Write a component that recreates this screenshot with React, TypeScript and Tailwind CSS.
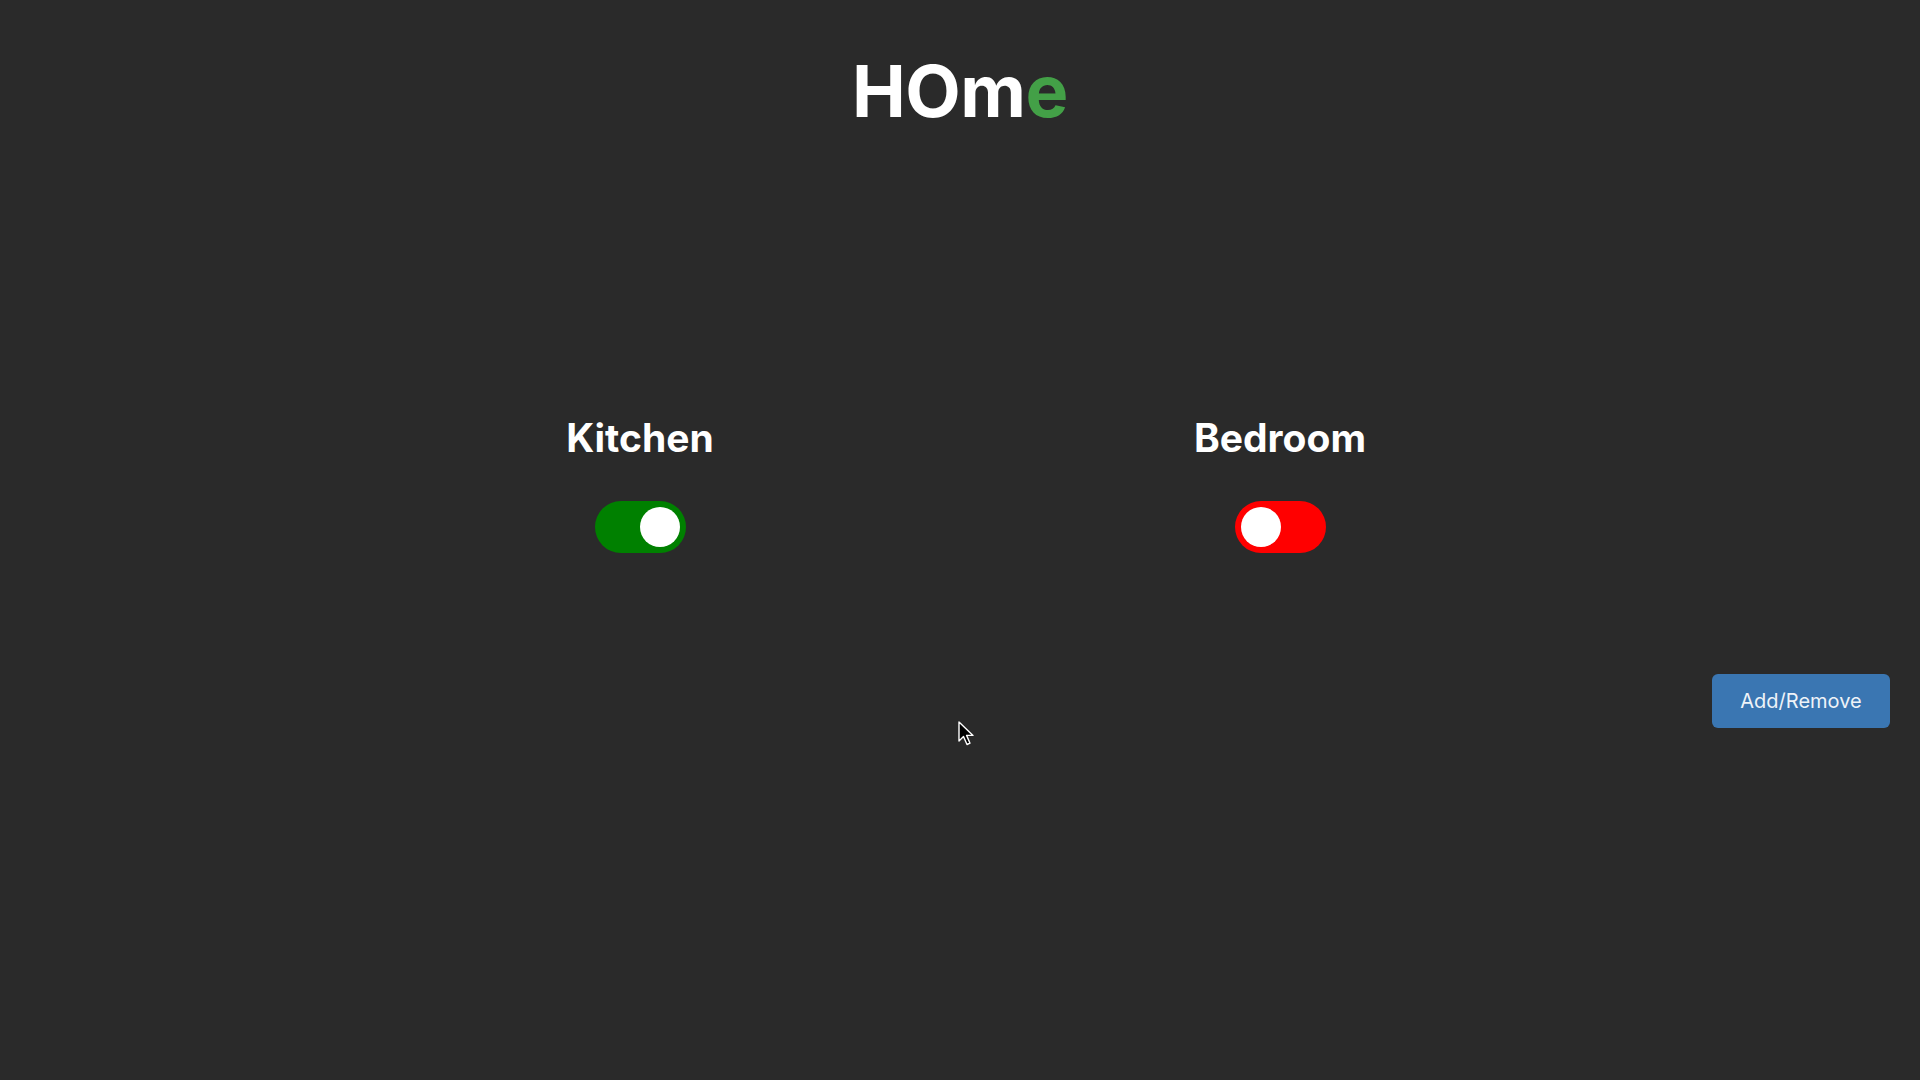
import { useState } from 'react';

type Room = { name: string; on: boolean };

function Toggle({ on, onClick }: { on: boolean; onClick: () => void }) {
  return (
    <button
      onClick={onClick}
      className={`flex items-center w-[91px] h-[52px] rounded-full px-[6px] ${
        on ? 'bg-[#008000] justify-end' : 'bg-[#ff0000] justify-start'
      }`}
    >
      <span className="block w-[40px] h-[40px] rounded-full bg-white" />
    </button>
  );
}

export default function App() {
  const [rooms, setRooms] = useState<Room[]>([
    { name: 'Kitchen', on: true },
    { name: 'Bedroom', on: false },
  ]);

  const flip = (i: number) =>
    setRooms(rooms.map((r, j) => (j === i ? { ...r, on: !r.on } : r)));

  return (
    <div
      className="relative min-h-screen w-full bg-[#2a2a2a] text-white flex flex-col"
      style={{ fontFamily: 'Inter, "Liberation Sans", sans-serif' }}
    >
      <h1 className="pt-[55px] text-center text-[72px] font-bold leading-none tracking-[-0.5px]">
        HOm<span className="text-[#43a047]">e</span>
      </h1>

      <div className="mt-[291px] grid grid-cols-2 px-[320px]">
        {rooms.map((r, i) => (
          <div key={r.name} className="flex flex-col items-center">
            <h2 className="text-[39px] font-bold leading-none">{r.name}</h2>
            <div className="mt-[44px]">
              <Toggle on={r.on} onClick={() => flip(i)} />
            </div>
          </div>
        ))}
      </div>

      <div className="mt-[121px] flex justify-end pr-[30px]">
        <button className="w-[178px] h-[54px] rounded-[6px] bg-[#3a76b2] text-[#eef3f8] text-[20px]">
          Add/Remove
        </button>
      </div>

      {/* mouse pointer */}
      <svg
        className="absolute left-[958px] top-[721px]"
        width="18"
        height="26"
        viewBox="0 0 18 26"
      >
        <path
          d="M1 1 L1 20 L5.5 15.5 L9 23.5 L12 22.2 L8.6 14.4 L15 14.4 Z"
          fill="#000"
          stroke="#fff"
          strokeWidth="1.4"
          strokeLinejoin="round"
        />
      </svg>
    </div>
  );
}
